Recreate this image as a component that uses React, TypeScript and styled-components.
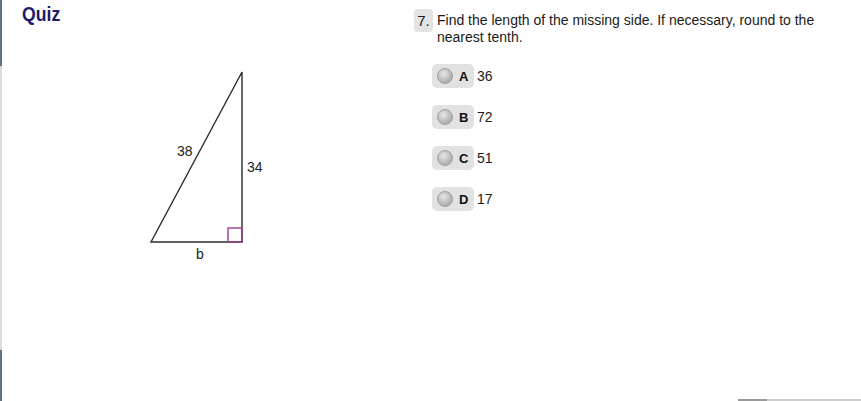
import React from "react";
import styled, { createGlobalStyle } from "styled-components";

interface Choice {
  letter: string;
  value: string;
}

const choices: Choice[] = [
  { letter: "A", value: "36" },
  { letter: "B", value: "72" },
  { letter: "C", value: "51" },
  { letter: "D", value: "17" },
];

const GlobalStyle = createGlobalStyle`
  html, body {
    margin: 0;
    padding: 0;
    background: #fff;
  }
  body {
    font-family: "Liberation Sans", Arial, sans-serif;
    color: #1a1a1a;
  }
`;

const Figure: React.FC = () => {
  return (
    <FigureSvg width="140" height="210" viewBox="0 0 140 210">
      <polygon
        points="11,182 102,12 102,182"
        fill="none"
        stroke="#2b2b2b"
        strokeWidth="1.4"
        strokeLinejoin="miter"
      />
      <rect x="88" y="168" width="14" height="14" fill="none" stroke="#9c3a8e" strokeWidth="1.4" />
      <FigureLabel x="37" y="96">38</FigureLabel>
      <FigureLabel x="107" y="112">34</FigureLabel>
      <FigureLabel x="56" y="199">b</FigureLabel>
    </FigureSvg>
  );
};

const App: React.FC = () => {
  return (
    <Page>
      <GlobalStyle />
      <Rail>
        <RailSegment $dark $height={66} />
        <RailSegment $height={284} />
        <RailSegment $dark $height={51} />
      </Rail>
      <Main>
        <Content>
          <LeftPane>
            <Title>Quiz</Title>
            <Figure />
          </LeftPane>
          <RightPane>
            <QuestionRow>
              <NumberBadge>7.</NumberBadge>
              <QuestionText>
                Find the length of the missing side. If necessary, round to the nearest tenth.
              </QuestionText>
            </QuestionRow>
            <ChoiceList>
              {choices.map((c) => (
                <ChoiceRow key={c.letter}>
                  <ChoicePill>
                    <Radio />
                    <ChoiceLetter>{c.letter}</ChoiceLetter>
                  </ChoicePill>
                  <ChoiceValue>{c.value}</ChoiceValue>
                </ChoiceRow>
              ))}
            </ChoiceList>
          </RightPane>
        </Content>
        <Footer>
          <ScrollTrack>
            <ScrollThumb />
          </ScrollTrack>
        </Footer>
      </Main>
    </Page>
  );
};

const Page = styled.div`
  display: flex;
  width: 861px;
  height: 401px;
  overflow: hidden;
  background: #fff;
`;

const Rail = styled.div`
  display: flex;
  flex-direction: column;
  width: 2px;
`;

const RailSegment = styled.div<{ $dark?: boolean; $height: number }>`
  height: ${(p) => p.$height}px;
  width: 2px;
  background: ${(p) => (p.$dark ? "#5e6f7e" : "#dcdcdc")};
`;

const Main = styled.div`
  flex: 1;
  display: flex;
  flex-direction: column;
`;

const Content = styled.div`
  flex: 1;
  display: flex;
`;

const LeftPane = styled.div`
  width: 412px;
  padding-left: 20px;
  box-sizing: border-box;
  display: flex;
  flex-direction: column;
`;

const Title = styled.h1`
  margin: 2px 0 0;
  height: 24px;
  font-family: "Liberation Sans", Arial, sans-serif;
  font-size: 21px;
  line-height: 24px;
  font-weight: 700;
  color: #1b1a6b;
  transform: scaleX(0.84);
  transform-origin: left center;
`;

const FigureSvg = styled.svg`
  display: block;
  margin: 34px 0 0 118px;
`;

const FigureLabel = styled.text`
  font-family: "Liberation Sans", Arial, sans-serif;
  font-size: 14px;
  fill: #222;
`;

const RightPane = styled.div`
  flex: 1;
  display: flex;
  flex-direction: column;
  padding-top: 9px;
`;

const QuestionRow = styled.div`
  display: flex;
  align-items: flex-start;
  gap: 4px;
`;

const NumberBadge = styled.div`
  width: 19px;
  height: 23px;
  border-radius: 4px;
  background: #e4e4e4;
  font-size: 15px;
  line-height: 23px;
  text-align: center;
  color: #1a1a1a;
`;

const QuestionText = styled.p`
  margin: 0;
  padding-top: 3px;
  width: 400px;
  font-size: 14px;
  line-height: 17px;
  color: #1a1a1a;
`;

const ChoiceList = styled.div`
  display: flex;
  flex-direction: column;
  gap: 17px;
  margin: 18px 0 0 18px;
`;

const ChoiceRow = styled.div`
  display: flex;
  align-items: center;
  gap: 3px;
`;

const ChoicePill = styled.div`
  display: flex;
  align-items: center;
  width: 42px;
  height: 24px;
  box-sizing: border-box;
  padding-left: 5px;
  border-radius: 5px;
  background: #e2e2e2;
`;

const Radio = styled.span`
  width: 16px;
  height: 16px;
  border-radius: 50%;
  box-sizing: border-box;
  border: 1px solid #a0a0a0;
  background: radial-gradient(circle at 40% 35%, #e8e8e8 0%, #c2c2c2 45%, #989898 100%);
`;

const ChoiceLetter = styled.span`
  margin-left: 6px;
  font-size: 13px;
  font-weight: 700;
  color: #111;
`;

const ChoiceValue = styled.span`
  font-size: 14px;
  color: #1a1a1a;
`;

const Footer = styled.div`
  display: flex;
  justify-content: flex-end;
  height: 3px;
`;

const ScrollTrack = styled.div`
  width: 123px;
  height: 2px;
  margin-top: 1px;
  background: #cfcfcf;
  display: flex;
`;

const ScrollThumb = styled.div`
  width: 29px;
  height: 2px;
  background: #9a9a9a;
`;

export default App;
